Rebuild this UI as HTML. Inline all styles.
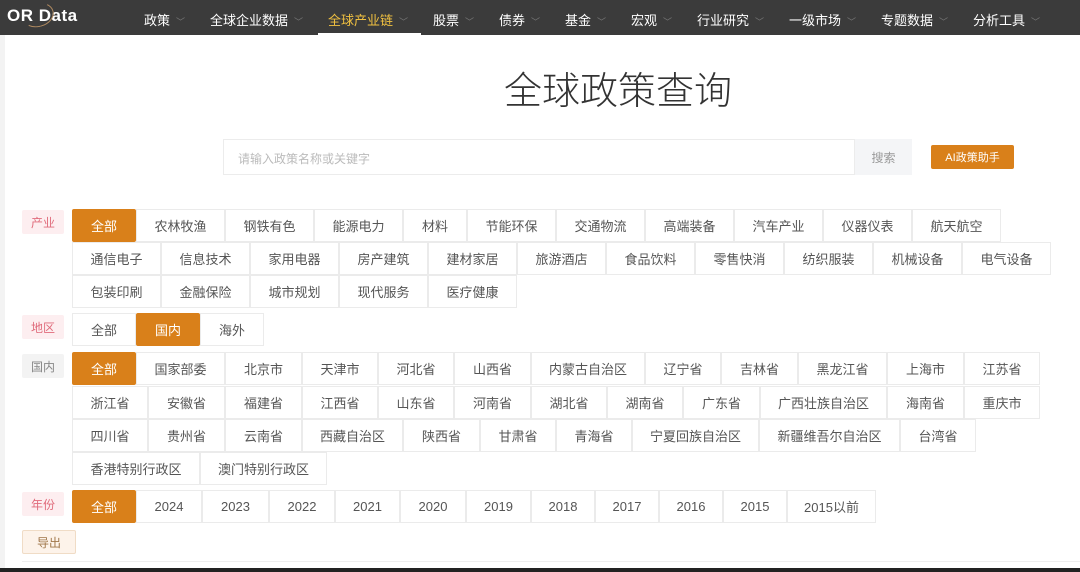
<!DOCTYPE html>
<html><head><meta charset="utf-8"><style>
*{margin:0;padding:0;box-sizing:border-box}
body{width:1080px;height:572px;position:relative;background:#fff;font-family:"Liberation Sans","Noto Sans CJK SC",sans-serif;overflow:hidden}
.nav{position:absolute;left:0;top:0;width:1080px;height:35px;background:#3b3b3b}
.n{position:absolute;top:10px;color:#fff;font-size:13px}
.n:after{content:"﹀";color:#777;font-size:9px;margin-left:6px}
.b{position:absolute;height:33px;border:1px solid #ebebeb;background:#fff;color:#555;font-size:13px;display:flex;align-items:center;justify-content:center}
.o{background:#d9801a;color:#fff;border-color:#d9801a;border-radius:2px}
.l{position:absolute;left:22px;width:42px;height:24px;background:#fdeef0;color:#e06c7c;font-size:12px;display:flex;align-items:center;justify-content:center;border-radius:2px}
</style></head><body>
<div style="position:absolute;left:0;top:35px;width:5px;height:537px;background:#f3f3f3"></div>
<div class="nav">
<div style="position:absolute;left:7px;top:6px;color:#fff;font-weight:bold;font-size:17px;letter-spacing:0.5px">OR Data</div>
<div style="position:absolute;left:22px;top:3px;width:32px;height:24px;border:1.5px solid #b08a60;border-radius:50%;transform:rotate(-15deg);border-left-color:transparent;border-top-color:transparent"></div>
<div class="n" style="left:144px">政策</div>
<div class="n" style="left:210px">全球企业数据</div>
<div class="n" style="left:328px;color:#f0c040">全球产业链</div>
<div style="position:absolute;left:318px;top:33px;width:103px;height:2px;background:#fff"></div>
<div class="n" style="left:433px">股票</div>
<div class="n" style="left:499px">债券</div>
<div class="n" style="left:565px">基金</div>
<div class="n" style="left:631px">宏观</div>
<div class="n" style="left:697px">行业研究</div>
<div class="n" style="left:789px">一级市场</div>
<div class="n" style="left:881px">专题数据</div>
<div class="n" style="left:973px">分析工具</div>
</div>
<div style="position:absolute;left:0;top:60px;width:1236px;text-align:center;font-size:38px;color:#333;font-weight:300">全球政策查询</div>
<div style="position:absolute;left:223px;top:139px;width:632px;height:36px;border:1px solid #ececec;color:#bbb;font-size:12px;padding:10px 0 0 14px">请输入政策名称或关键字</div>
<div style="position:absolute;left:855px;top:139px;width:57px;height:36px;background:#f4f5f7;color:#999;font-size:12px;display:flex;align-items:center;justify-content:center">搜索</div>
<div style="position:absolute;left:931px;top:145px;width:83px;height:24px;background:#d9801a;color:#fff;font-size:11px;display:flex;align-items:center;justify-content:center;border-radius:2px">AI政策助手</div>

<div class="l" style="top:210px">产业</div>
<div class="b o" style="left:72px;top:209px;width:64px">全部</div>
<div class="b" style="left:136px;top:209px;width:89px">农林牧渔</div>
<div class="b" style="left:225px;top:209px;width:89px">钢铁有色</div>
<div class="b" style="left:314px;top:209px;width:89px">能源电力</div>
<div class="b" style="left:403px;top:209px;width:64px">材料</div>
<div class="b" style="left:467px;top:209px;width:89px">节能环保</div>
<div class="b" style="left:556px;top:209px;width:89px">交通物流</div>
<div class="b" style="left:645px;top:209px;width:89px">高端装备</div>
<div class="b" style="left:734px;top:209px;width:89px">汽车产业</div>
<div class="b" style="left:823px;top:209px;width:89px">仪器仪表</div>
<div class="b" style="left:912px;top:209px;width:89px">航天航空</div>
<div class="b" style="left:72px;top:242px;width:89px">通信电子</div>
<div class="b" style="left:161px;top:242px;width:89px">信息技术</div>
<div class="b" style="left:250px;top:242px;width:89px">家用电器</div>
<div class="b" style="left:339px;top:242px;width:89px">房产建筑</div>
<div class="b" style="left:428px;top:242px;width:89px">建材家居</div>
<div class="b" style="left:517px;top:242px;width:89px">旅游酒店</div>
<div class="b" style="left:606px;top:242px;width:89px">食品饮料</div>
<div class="b" style="left:695px;top:242px;width:89px">零售快消</div>
<div class="b" style="left:784px;top:242px;width:89px">纺织服装</div>
<div class="b" style="left:873px;top:242px;width:89px">机械设备</div>
<div class="b" style="left:962px;top:242px;width:89px">电气设备</div>
<div class="b" style="left:72px;top:275px;width:89px">包装印刷</div>
<div class="b" style="left:161px;top:275px;width:89px">金融保险</div>
<div class="b" style="left:250px;top:275px;width:89px">城市规划</div>
<div class="b" style="left:339px;top:275px;width:89px">现代服务</div>
<div class="b" style="left:428px;top:275px;width:89px">医疗健康</div>

<div class="l" style="top:315px">地区</div>
<div class="b" style="left:72px;top:313px;width:64px">全部</div>
<div class="b o" style="left:136px;top:313px;width:64px">国内</div>
<div class="b" style="left:200px;top:313px;width:64px">海外</div>

<div class="l" style="top:354px;background:#f3f3f3;color:#888">国内</div>
<div class="b o" style="left:72px;top:352px;width:64px">全部</div>
<div class="b" style="left:136px;top:352px;width:89px">国家部委</div>
<div class="b" style="left:225px;top:352px;width:77px">北京市</div>
<div class="b" style="left:302px;top:352px;width:76px">天津市</div>
<div class="b" style="left:378px;top:352px;width:76px">河北省</div>
<div class="b" style="left:454px;top:352px;width:77px">山西省</div>
<div class="b" style="left:531px;top:352px;width:114px">内蒙古自治区</div>
<div class="b" style="left:645px;top:352px;width:76px">辽宁省</div>
<div class="b" style="left:721px;top:352px;width:77px">吉林省</div>
<div class="b" style="left:798px;top:352px;width:89px">黑龙江省</div>
<div class="b" style="left:887px;top:352px;width:77px">上海市</div>
<div class="b" style="left:964px;top:352px;width:76px">江苏省</div>
<div class="b" style="left:72px;top:386px;width:76px">浙江省</div>
<div class="b" style="left:148px;top:386px;width:77px">安徽省</div>
<div class="b" style="left:225px;top:386px;width:77px">福建省</div>
<div class="b" style="left:302px;top:386px;width:76px">江西省</div>
<div class="b" style="left:378px;top:386px;width:76px">山东省</div>
<div class="b" style="left:454px;top:386px;width:77px">河南省</div>
<div class="b" style="left:531px;top:386px;width:76px">湖北省</div>
<div class="b" style="left:607px;top:386px;width:76px">湖南省</div>
<div class="b" style="left:683px;top:386px;width:77px">广东省</div>
<div class="b" style="left:760px;top:386px;width:127px">广西壮族自治区</div>
<div class="b" style="left:887px;top:386px;width:77px">海南省</div>
<div class="b" style="left:964px;top:386px;width:76px">重庆市</div>
<div class="b" style="left:72px;top:419px;width:76px">四川省</div>
<div class="b" style="left:148px;top:419px;width:77px">贵州省</div>
<div class="b" style="left:225px;top:419px;width:77px">云南省</div>
<div class="b" style="left:302px;top:419px;width:101px">西藏自治区</div>
<div class="b" style="left:403px;top:419px;width:77px">陕西省</div>
<div class="b" style="left:480px;top:419px;width:76px">甘肃省</div>
<div class="b" style="left:556px;top:419px;width:76px">青海省</div>
<div class="b" style="left:632px;top:419px;width:127px">宁夏回族自治区</div>
<div class="b" style="left:759px;top:419px;width:141px">新疆维吾尔自治区</div>
<div class="b" style="left:900px;top:419px;width:76px">台湾省</div>
<div class="b" style="left:72px;top:452px;width:128px">香港特别行政区</div>
<div class="b" style="left:200px;top:452px;width:127px">澳门特别行政区</div>

<div class="l" style="top:492px">年份</div>
<div class="b o" style="left:72px;top:490px;width:64px">全部</div>
<div class="b" style="left:136px;top:490px;width:66px">2024</div>
<div class="b" style="left:202px;top:490px;width:67px">2023</div>
<div class="b" style="left:269px;top:490px;width:66px">2022</div>
<div class="b" style="left:335px;top:490px;width:65px">2021</div>
<div class="b" style="left:400px;top:490px;width:66px">2020</div>
<div class="b" style="left:466px;top:490px;width:65px">2019</div>
<div class="b" style="left:531px;top:490px;width:64px">2018</div>
<div class="b" style="left:595px;top:490px;width:64px">2017</div>
<div class="b" style="left:659px;top:490px;width:64px">2016</div>
<div class="b" style="left:723px;top:490px;width:64px">2015</div>
<div class="b" style="left:787px;top:490px;width:89px">2015以前</div>

<div style="position:absolute;left:22px;top:530px;width:54px;height:24px;background:#fdf3ea;border:1px solid #f0dcc6;color:#a0774a;font-size:12px;display:flex;align-items:center;justify-content:center;border-radius:2px">导出</div>
<div style="position:absolute;left:22px;top:561px;width:1058px;height:1px;background:#eee"></div>
<div style="position:absolute;left:0;top:568px;width:1080px;height:4px;background:#222"></div>
</body></html>
